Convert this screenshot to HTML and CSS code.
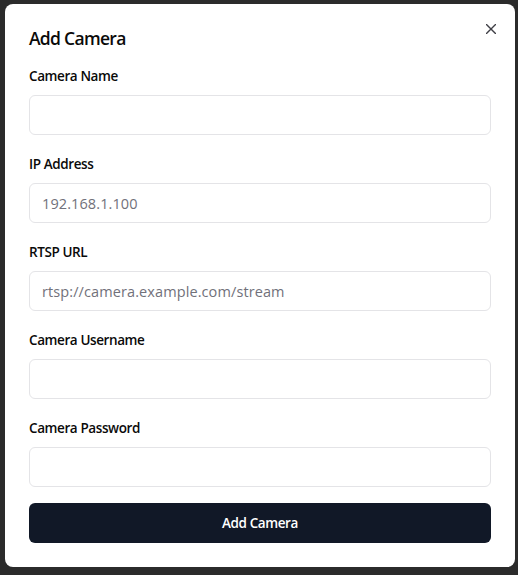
FILE: index.html
```html
<!DOCTYPE html>
<html lang="en">
<head>
<meta charset="utf-8">
<title>Add Camera</title>
<link rel="stylesheet" href="styles.css">
</head>
<body>
<div class="dialog">
  <button class="close" aria-label="Close">
    <svg width="10" height="10" viewBox="0 0 10 10"><path d="M0.5 0.5 L9.5 9.5 M9.5 0.5 L0.5 9.5" stroke="#3f3f46" stroke-width="1.4" fill="none" stroke-linecap="square"/></svg>
  </button>
  <h2 class="title">Add Camera</h2>
  <form class="form">
    <div class="group">
      <label class="label">Camera Name</label>
      <input class="input" type="text">
    </div>
    <div class="group">
      <label class="label">IP Address</label>
      <input class="input" type="text" placeholder="192.168.1.100">
    </div>
    <div class="group">
      <label class="label">RTSP URL</label>
      <input class="input" type="text" placeholder="rtsp://camera.example.com/stream">
    </div>
    <div class="group">
      <label class="label">Camera Username</label>
      <input class="input" type="text">
    </div>
    <div class="group">
      <label class="label">Camera Password</label>
      <input class="input" type="password">
    </div>
    <button class="submit" type="button">Add Camera</button>
  </form>
</div>
</body>
</html>
```

FILE: styles.css
```css
html, body {
  margin: 0;
  padding: 0;
  background: #2b2b2b;
  height: 100%;
}
body {
  font-family: "Open Sans", "Noto Sans", sans-serif;
  padding: 4px 3px 0 5px;
  box-sizing: border-box;
}
.dialog {
  position: relative;
  width: 510px;
  box-sizing: border-box;
  background: #ffffff;
  border-radius: 8px;
  padding: 25px 24px 24px 24px;
}
.close {
  position: absolute;
  top: 20px;
  right: 19px;
  width: 10px;
  height: 10px;
  padding: 0;
  border: 0;
  background: none;
  display: flex;
}
.title {
  margin: 0 0 19px 0;
  font-size: 17.5px;
  line-height: 18px;
  font-weight: 600;
  color: #0a0a0a;
  letter-spacing: -0.7px;
}
.form {
  display: flex;
  flex-direction: column;
  gap: 19px;
}
.group {
  display: flex;
  flex-direction: column;
}
.label {
  font-size: 13.5px;
  line-height: 20px;
  font-weight: 600;
  color: #0a0a0a;
  margin-bottom: 9px;
  letter-spacing: -0.4px;
}
.input {
  height: 40px;
  box-sizing: border-box;
  border: 1px solid #e4e4e7;
  border-radius: 6px;
  padding: 0 12px;
  font-family: inherit;
  font-size: 14.5px;
  color: #0a0a0a;
  background: #fff;
  outline: none;
  letter-spacing: 0.1px;
}
.input::placeholder {
  color: #71717a;
}
.submit {
  margin-top: -3px;
  height: 40px;
  border: 0;
  border-radius: 6px;
  background: #111827;
  color: #ffffff;
  font-family: inherit;
  font-size: 13.5px;
  font-weight: 600;
  letter-spacing: -0.4px;
}
```
